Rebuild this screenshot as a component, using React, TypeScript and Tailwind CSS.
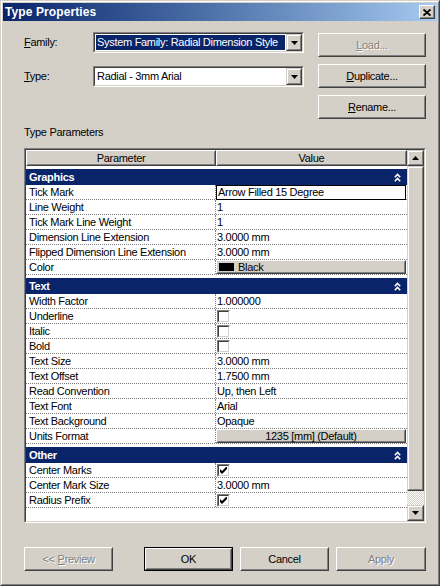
import React from "react";

type Kids = { className?: string; inner?: string; children?: React.ReactNode };

// classic 3d frames, two 1px rings each
function Raised({ className = "", inner = "", children }: Kids) {
  return (
    <div className={`border border-t-white border-l-white border-r-[#404040] border-b-[#404040] bg-[#d4d0c8] ${className}`}>
      <div className={`h-full w-full border border-t-[#d4d0c8] border-l-[#d4d0c8] border-r-[#808080] border-b-[#808080] ${inner}`}>
        {children}
      </div>
    </div>
  );
}

function ScrollFace({ className = "", inner = "", children }: Kids) {
  return (
    <div className={`border border-t-[#d4d0c8] border-l-[#d4d0c8] border-r-[#404040] border-b-[#404040] bg-[#d4d0c8] ${className}`}>
      <div className={`h-full w-full border border-t-white border-l-white border-r-[#808080] border-b-[#808080] ${inner}`}>
        {children}
      </div>
    </div>
  );
}

function Sunken({ className = "", inner = "", children }: Kids) {
  return (
    <div className={`border border-t-[#808080] border-l-[#808080] border-r-white border-b-white ${className}`}>
      <div className={`h-full w-full border border-t-[#404040] border-l-[#404040] border-r-[#d4d0c8] border-b-[#d4d0c8] ${inner}`}>
        {children}
      </div>
    </div>
  );
}

const disabled = "text-[#808080] [text-shadow:1px_1px_0_#ffffff]";

function ArrowDown() {
  return (
    <svg width="7" height="4" viewBox="0 0 7 4">
      <polygon points="0,0 7,0 3.5,4" fill="black" />
    </svg>
  );
}

function ArrowUp() {
  return (
    <svg width="7" height="4" viewBox="0 0 7 4">
      <polygon points="0,4 7,4 3.5,0" fill="black" />
    </svg>
  );
}

function Chevrons() {
  return (
    <svg width="7" height="9" viewBox="0 0 7 9" className="ml-auto">
      <polyline points="0.8,4.2 3.5,1.5 6.2,4.2" fill="none" stroke="white" strokeWidth="1.6" />
      <polyline points="0.8,8.2 3.5,5.5 6.2,8.2" fill="none" stroke="white" strokeWidth="1.6" />
    </svg>
  );
}

function Combo({ text, selected }: { text: string; selected?: boolean }) {
  return (
    <Sunken className="w-[211px] h-[21px]" inner="bg-white flex items-stretch">
      <div className="flex-1 p-px">
        <div className={`h-full flex items-center pl-px ${selected ? "bg-[#0a246a] text-white" : ""}`}>{text}</div>
      </div>
      <ScrollFace className="w-[16px] h-[17px]" inner="flex items-center justify-center">
        <ArrowDown />
      </ScrollFace>
    </Sunken>
  );
}

function Button({ children, off, className = "" }: { children: React.ReactNode; off?: boolean; className?: string }) {
  return (
    <Raised className={`h-[24px] ${className}`} inner={`flex items-center justify-center ${off ? disabled : ""}`}>
      {children}
    </Raised>
  );
}

function Check({ on }: { on?: boolean }) {
  return (
    <Sunken className="w-[13px] h-[13px]" inner="bg-white flex items-center justify-center">
      {on && (
        <svg width="7" height="7" viewBox="0 0 7 7">
          <polygon points="0,2 2,4 6,0 7,0 7,2 2,7 0,5" fill="black" />
        </svg>
      )}
    </Sunken>
  );
}

type Val = string | { check: boolean } | { btn: string } | { color: string } | { edit: string };

type Row = [string, Val];

const sections: { name: string; rows: Row[] }[] = [
  {
    name: "Graphics",
    rows: [
      ["Tick Mark", { edit: "Arrow Filled 15 Degree" }],
      ["Line Weight", "1"],
      ["Tick Mark Line Weight", "1"],
      ["Dimension Line Extension", "3.0000 mm"],
      ["Flipped Dimension Line Extension", "3.0000 mm"],
      ["Color", { color: "Black" }],
    ],
  },
  {
    name: "Text",
    rows: [
      ["Width Factor", "1.000000"],
      ["Underline", { check: false }],
      ["Italic", { check: false }],
      ["Bold", { check: false }],
      ["Text Size", "3.0000 mm"],
      ["Text Offset", "1.7500 mm"],
      ["Read Convention", "Up, then Left"],
      ["Text Font", "Arial"],
      ["Text Background", "Opaque"],
      ["Units Format", { btn: "1235 [mm] (Default)" }],
    ],
  },
  {
    name: "Other",
    rows: [
      ["Center Marks", { check: true }],
      ["Center Mark Size", "3.0000 mm"],
      ["Radius Prefix", { check: true }],
    ],
  },
];

function Value({ v }: { v: Val }) {
  if (typeof v === "string") return <div className="pl-px leading-[14px] h-full">{v}</div>;
  if ("edit" in v)
    return <div className="h-[15px] mr-px border border-black bg-white leading-[13px] pl-px">{v.edit}</div>;
  if ("check" in v)
    return (
      <div className="pl-px pt-px">
        <Check on={v.check} />
      </div>
    );
  if ("btn" in v)
    return (
      <Raised className="h-[14px] mr-px" inner="flex items-center justify-center leading-[10px]">
        {v.btn}
      </Raised>
    );
  return (
    <Raised className="h-[14px] mr-px" inner="flex items-center leading-[10px]">
      <div className="w-[15px] h-[8px] bg-black ml-px" />
      <span className="ml-[4px]">{v.color}</span>
    </Raised>
  );
}

export default function App() {
  return (
    <div className="w-[440px] h-[586px] bg-[#d4d0c8] border border-t-[#d4d0c8] border-l-[#d4d0c8] border-r-[#404040] border-b-[#404040] font-['Liberation_Sans',Arial,sans-serif] text-[11px] tracking-[-0.3px] text-black select-none">
      <div className="h-full border border-t-white border-l-white border-r-[#808080] border-b-[#808080] p-px flex flex-col">
        {/* Title bar */}
        <div className="h-[18px] flex items-center bg-linear-to-r from-[#0a246a] to-[#a6caf0] pl-[2px] pr-[2px]">
          <span className="font-bold text-white text-[12px] tracking-[0.1px]">Type Properties</span>
          <Raised className="ml-auto w-[16px] h-[14px]" inner="flex items-center justify-center">
            <svg width="8" height="7" viewBox="0 0 8 7">
              <path d="M0.5 0.5 L7.5 6.5 M7.5 0.5 L0.5 6.5" stroke="black" strokeWidth="1.8" />
            </svg>
          </Raised>
        </div>

        <div className="flex-1 pl-[21px] pr-[11px] flex flex-col">
          {/* Family / Type */}
          <div className="mt-[11px] flex">
            <div className="flex flex-col gap-[13px]">
              <div className="flex items-center h-[21px]">
                <span className="w-[69px]">
                  <span className="underline">F</span>amily:
                </span>
                <Combo text="System Family: Radial Dimension Style" selected />
              </div>
              <div className="flex items-center h-[21px]">
                <span className="w-[69px]">
                  <span className="underline">T</span>ype:
                </span>
                <Combo text="Radial - 3mm Arial" />
              </div>
            </div>
            <div className="ml-auto mt-px w-[108px] flex flex-col gap-[7px]">
              <Button off>
                <span className="underline">L</span>oad...
              </Button>
              <Button>
                <span className="underline">D</span>uplicate...
              </Button>
              <Button>
                <span className="underline">R</span>ename...
              </Button>
            </div>
          </div>

          <div className="mt-[7px] leading-[13px]">Type Parameters</div>

          {/* Property grid */}
          <Sunken className="mt-[9px] h-[375px]" inner="flex">
            <div className="w-[381px] bg-white flex flex-col">
              <div className="flex h-[16px]">
                <Raised className="w-[190px]" inner="flex items-center justify-center leading-[12px]">
                  Parameter
                </Raised>
                <Raised className="flex-1" inner="flex items-center justify-center leading-[12px]">
                  Value
                </Raised>
              </div>
              {sections.map((s) => (
                <div key={s.name}>
                  <div className="h-[3px]" />
                  <div className="h-[16px] bg-[#0a246a] text-white font-bold flex items-center pl-[3px] pr-[6px]">
                    {s.name}
                    <Chevrons />
                  </div>
                  {s.rows.map(([label, v]) => (
                    <div key={label} className="flex h-[15px] border-b border-dotted border-[#808080]">
                      <div className="w-[190px] shrink-0 border-r border-dotted border-[#808080] pl-[3px] leading-[14px] whitespace-nowrap overflow-hidden">
                        {label}
                      </div>
                      <div className="flex-1 min-w-0 whitespace-nowrap">
                        <Value v={v} />
                      </div>
                    </div>
                  ))}
                </div>
              ))}
            </div>
            {/* Scrollbar */}
            <div className="w-[17px] flex flex-col">
              <ScrollFace className="h-[16px]" inner="flex items-center justify-center">
                <ArrowUp />
              </ScrollFace>
              <ScrollFace className="h-[325px]" />
              <div className="h-[14px] [background-image:repeating-conic-gradient(#d4d0c8_0%_25%,#ffffff_0%_50%)] [background-size:2px_2px]" />
              <ScrollFace className="h-[16px]" inner="flex items-center justify-center">
                <ArrowDown />
              </ScrollFace>
            </div>
          </Sunken>

          {/* Bottom buttons */}
          <div className="mt-[24px] flex">
            <Button off className="w-[89px]">
              &lt;&lt; <span className="underline ml-[3px]">P</span>review
            </Button>
            <div className="ml-[31px] w-[89px] h-[24px] border border-black">
              <Raised className="h-full" inner="flex items-center justify-center">
                OK
              </Raised>
            </div>
            <Button className="ml-[7px] w-[89px]">Cancel</Button>
            <Button off className="ml-[7px] w-[90px]">
              Apply
            </Button>
          </div>
        </div>
      </div>
    </div>
  );
}
